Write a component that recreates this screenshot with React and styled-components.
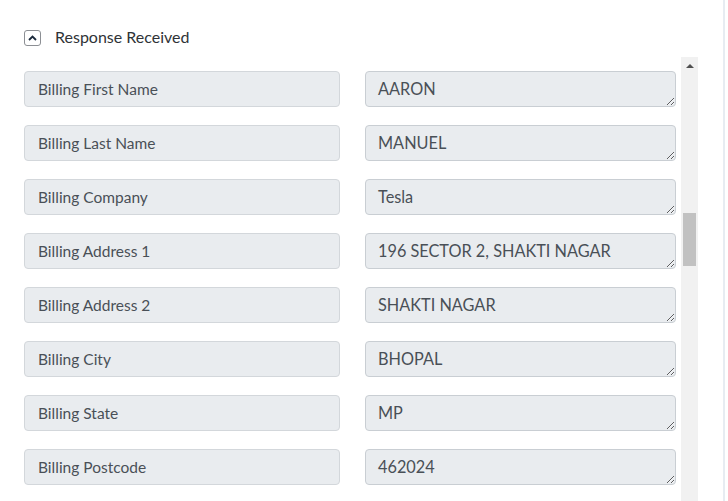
import React from "react";
import styled, { createGlobalStyle } from "styled-components";

const rows = [
  ["Billing First Name", "AARON"],
  ["Billing Last Name", "MANUEL"],
  ["Billing Company", "Tesla"],
  ["Billing Address 1", "196 SECTOR 2, SHAKTI NAGAR"],
  ["Billing Address 2", "SHAKTI NAGAR"],
  ["Billing City", "BHOPAL"],
  ["Billing State", "MP"],
  ["Billing Postcode", "462024"],
];

const GlobalStyle = createGlobalStyle`
  body {
    margin: 0;
    background: #fff;
    font-family: Lato, "Open Sans", sans-serif;
    overflow: hidden;
  }
`;

const Frame = styled.div`
  width: 725px;
  height: 501px;
  box-sizing: border-box;
  border-right: 2px solid #e7ecf2;
  padding-left: 24px;
  overflow: hidden;
`;

const Header = styled.div`
  display: flex;
  align-items: center;
  gap: 14px;
  margin-top: 29px;
  height: 18px;
`;

const Toggle = styled.button`
  width: 17px;
  height: 16px;
  padding: 0;
  display: flex;
  align-items: center;
  justify-content: center;
  background: #fff;
  border: 1px solid #8c8f94;
  border-radius: 3px;
  color: #1b2a3c;
`;

const Title = styled.span`
  font-size: 16px;
  color: #2f3337;
  margin-top: -3px;
`;

const Panel = styled.div`
  display: flex;
  gap: 5px;
  margin-top: 10px;
  height: 460px;
`;

const List = styled.div`
  width: 652px;
  padding-top: 14px;
  display: grid;
  grid-template-columns: 316px 311px;
  column-gap: 25px;
  row-gap: 18px;
  align-content: start;
`;

const Label = styled.div`
  height: 36px;
  box-sizing: border-box;
  padding: 0 13px;
  display: flex;
  align-items: center;
  background: #e9ecef;
  border: 1px solid #d3d7db;
  border-radius: 4px;
  font-size: 15.5px;
  color: #495057;
`;

const Value = styled.textarea`
  height: 36px;
  box-sizing: border-box;
  padding: 7px 12px;
  background: #e9ecef;
  border: 1px solid #c9ced3;
  border-radius: 4px;
  font-family: Lato, "Open Sans", sans-serif;
  font-size: 16.3px;
  line-height: 20px;
  color: #495057;
  resize: vertical;
  overflow: hidden;
  outline: none;
`;

const Track = styled.div`
  width: 17px;
  background: #f1f1f1;
  display: flex;
  flex-direction: column;
  align-items: center;
`;

const Arrow = styled.div`
  margin-top: 7px;
  width: 0;
  height: 0;
  border-left: 4px solid transparent;
  border-right: 4px solid transparent;
  border-bottom: 4px solid #505050;
`;

const Thumb = styled.div`
  margin-top: 145px;
  width: 13px;
  height: 53px;
  background: #c1c1c1;
`;

const CaretUp = () => (
  <svg width="9" height="6" viewBox="0 0 9 6" fill="none">
    <path d="M1 5 L4.5 1.5 L8 5" stroke="currentColor" strokeWidth="1.8" />
  </svg>
);

export default function App() {
  return (
    <>
      <GlobalStyle />
      <Frame>
        <Header>
          <Toggle>
            <CaretUp />
          </Toggle>
          <Title>Response Received</Title>
        </Header>
        <Panel>
          <List>
            {rows.map(([label, value]) => (
              <React.Fragment key={label}>
                <Label>{label}</Label>
                <Value readOnly value={value} rows={1} />
              </React.Fragment>
            ))}
          </List>
          <Track>
            <Arrow />
            <Thumb />
          </Track>
        </Panel>
      </Frame>
    </>
  );
}
